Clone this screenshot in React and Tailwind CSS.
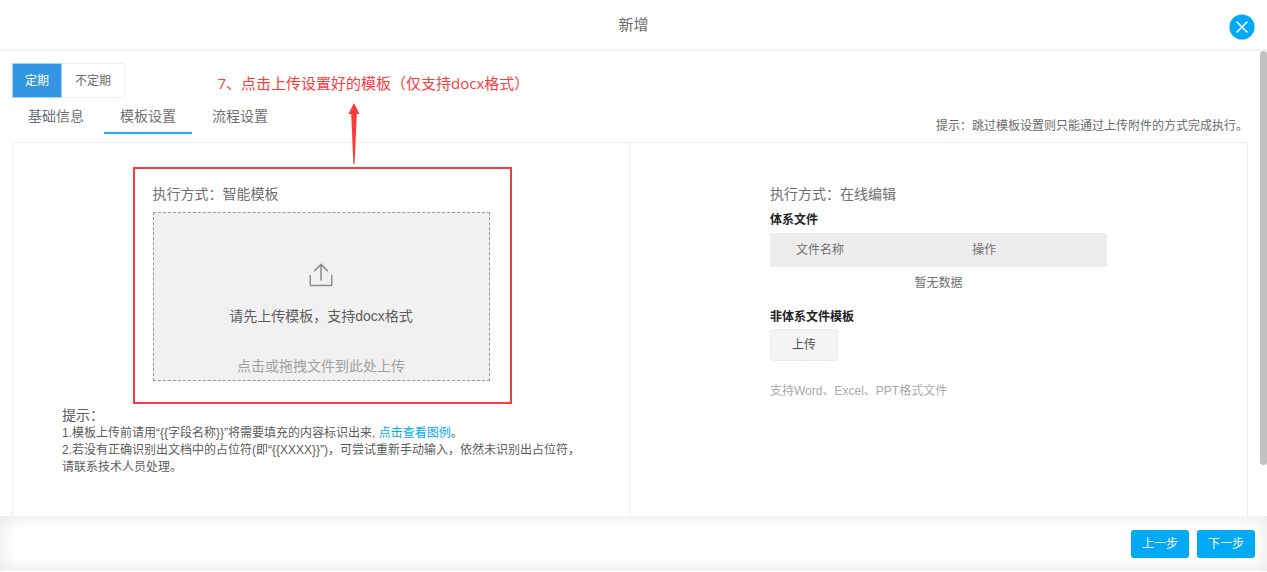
import { useState } from "react";

const periodOptions = ["定期", "不定期"];
const tabs = ["基础信息", "模板设置", "流程设置"];

function CloseIcon() {
  return (
    <svg viewBox="0 0 26 26" className="w-[26px] h-[26px]" aria-hidden="true">
      <circle cx="13" cy="13" r="12.6" fill="#03a9f4" />
      <path d="M8 8l10 10M18 8L8 18" stroke="#fff" strokeWidth="1.6" strokeLinecap="round" />
    </svg>
  );
}

function UploadIcon() {
  return (
    <svg viewBox="0 0 24 24" className="w-6 h-6" fill="none" stroke="#8c8c8c" strokeWidth="1.5" aria-hidden="true">
      <path d="M1.2 12.5v9.2a.8.8 0 0 0 .8.8h20a.8.8 0 0 0 .8-.8v-9.2" strokeLinecap="round" />
      <path d="M12 17V1.4M5.8 7.6L12 1.4L18.2 7.6" strokeLinecap="round" strokeLinejoin="round" />
    </svg>
  );
}

// Red step callout drawn over the upload area
function StepCallout({ text }) {
  return (
    <div className="absolute -top-[17px] -bottom-[23px] -left-5 -right-[22px] border-2 border-[#fb3b3b] pointer-events-none">
      <div className="absolute bottom-full left-[83px] flex flex-col">
        <p className="whitespace-nowrap text-[15px] leading-5 text-[#ff3b3b] font-['Open_Sans','Noto_Sans_CJK_SC',sans-serif]">
          {text}
        </p>
        <svg viewBox="0 0 12 62" className="w-3 h-[62px] ml-[130px] mt-2.5 mb-1" aria-hidden="true">
          <path d="M6 0L11.5 11H8.8L6.6 61H5.4L3.2 11H0.5Z" fill="#fb3b3b" />
        </svg>
      </div>
    </div>
  );
}

function SmartTemplatePanel() {
  return (
    <section className="w-1/2 border-r border-[#eeeeee] pt-[41px] pb-8">
      <div className="relative w-[337px] mx-auto">
        <h2 className="text-[14px] leading-5 text-[#707070]">执行方式：智能模板</h2>
        <label
          htmlFor="template-file"
          className="mt-2 h-[169px] flex flex-col items-center bg-[#f1f1f1] border border-dashed border-[#999] cursor-pointer"
        >
          <span className="mt-[50px]">
            <UploadIcon />
          </span>
          <span className="mt-[19px] text-[14px] leading-5 text-[#5c5c5c]">请先上传模板，支持docx格式</span>
          <span className="mt-[30px] text-[14px] leading-5 text-[#a0a0a0]">点击或拖拽文件到此处上传</span>
          <input id="template-file" type="file" accept=".docx" className="sr-only" />
        </label>
        <StepCallout text="7、点击上传设置好的模板（仅支持docx格式）" />
      </div>

      <div className="mt-6 pl-[49px] pr-11 text-[12px] leading-[17px] text-[#5c5c5c]">
        <p className="text-[14px] leading-5">提示：</p>
        <p>
          {"1.模板上传前请用“{{字段名称}}”将需要填充的内容标识出来, "}
          <a href="#example" className="text-[#03a9f4]">点击查看图例</a>。
        </p>
        <p>{"2.若没有正确识别出文档中的占位符(即“{{XXXX}}”)，可尝试重新手动输入，依然未识别出占位符，请联系技术人员处理。"}</p>
      </div>
    </section>
  );
}

function OnlineEditPanel() {
  return (
    <section className="w-1/2 pt-[41px] pb-8">
      <div className="w-[337px] mx-auto text-[12px] leading-5 text-[#707070]">
        <h2 className="text-[14px] leading-5">执行方式：在线编辑</h2>
        <h3 className="mt-[6px] font-bold text-[#222]">体系文件</h3>
        <table className="w-full mt-[3px]">
          <thead className="bg-[#ededed]">
            <tr className="h-[34px]">
              <th className="w-3/5 pl-[26px] text-left font-normal">文件名称</th>
              <th className="text-left font-normal">操作</th>
            </tr>
          </thead>
          <tbody>
            <tr className="h-8">
              <td colSpan={2} className="text-center">暂无数据</td>
            </tr>
          </tbody>
        </table>
        <h3 className="mt-2 font-bold text-[#222]">非体系文件模板</h3>
        <button
          type="button"
          className="block mt-0.5 w-[68px] h-8 rounded-[3px] border border-dashed border-[#e6e6e6] bg-[#f4f4f4] text-[#505050]"
        >
          上传
        </button>
        <p className="mt-5 text-[#aaa]">支持Word、Excel、PPT格式文件</p>
      </div>
    </section>
  );
}

function App() {
  const [period, setPeriod] = useState("定期");
  const [activeTab, setActiveTab] = useState("模板设置");

  return (
    <div className="min-h-screen flex flex-col bg-white pb-px font-['Liberation_Sans','Noto_Sans_CJK_SC',sans-serif]">
      <header className="h-[51px] px-3 flex items-center border-b-2 border-[#f3f3f3]">
        <div className="flex-1" />
        <h1 className="text-[15px] leading-5 text-[#6a6a6a]">新增</h1>
        <div className="flex-1 flex justify-end">
          <button type="button" aria-label="关闭" className="mt-1">
            <CloseIcon />
          </button>
        </div>
      </header>

      <div className="flex-1 flex">
        <main className="flex-1 flex flex-col pt-3 px-3">
          <div className="flex text-[12px]">
            {periodOptions.map((option) => (
              <button
                key={option}
                type="button"
                onClick={() => setPeriod(option)}
                className={
                  option === period
                    ? "h-[35px] px-3 border border-[#a8d1f2] bg-[#3396e2] text-white"
                    : "h-[35px] px-[13px] border border-l-0 border-[#eeeeee] text-[#6a6a6a]"
                }
              >
                {option}
              </button>
            ))}
          </div>

          <div className="flex items-end justify-between">
            <div role="tablist" className="flex gap-1 pt-0.5 text-[14px]">
              {tabs.map((tab) => (
                <button
                  key={tab}
                  type="button"
                  role="tab"
                  aria-selected={tab === activeTab}
                  onClick={() => setActiveTab(tab)}
                  className={
                    tab === activeTab
                      ? "h-[34px] px-4 border-b-2 border-[#1fb0f2] text-[#707070]"
                      : "h-[34px] px-4 border-b-2 border-transparent text-[#707070]"
                  }
                >
                  {tab}
                </button>
              ))}
            </div>
            <p className="text-[12px] leading-4 text-[#6a6a6a]">提示：跳过模板设置则只能通过上传附件的方式完成执行。</p>
          </div>

          <div className="flex-1 flex mt-2 border border-b-0 border-[#eeeeee]">
            <SmartTemplatePanel />
            <OnlineEditPanel />
          </div>
        </main>
        <div className="w-[7px]">
          <div className="h-[89%] rounded-full bg-[#c1c1c1]" />
        </div>
      </div>

      <footer className="h-[55px] px-3 flex items-center justify-end gap-2 text-[12px] text-white shadow-[inset_0_0_20px_#e6e6e6]">
        <button type="button" className="w-[58px] h-7 rounded-[3px] bg-[#03a9f4]">上一步</button>
        <button type="button" className="w-[58px] h-7 rounded-[3px] bg-[#03a9f4]">下一步</button>
      </footer>
    </div>
  );
}

export default App;
